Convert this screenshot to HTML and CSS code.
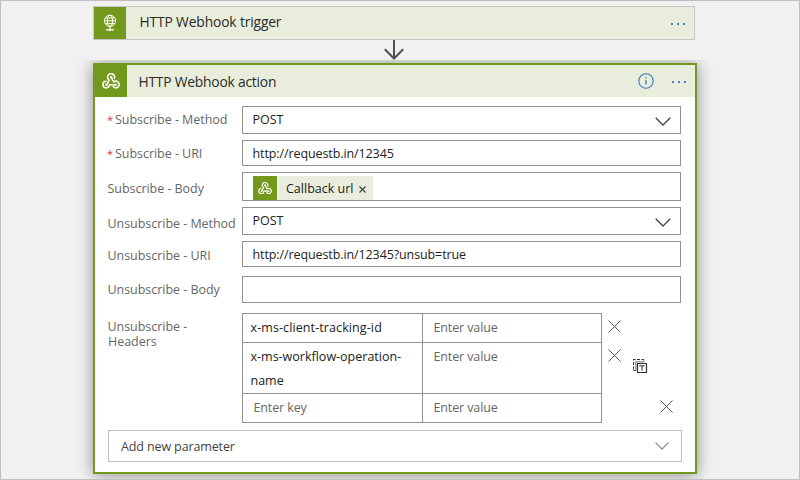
FILE: index.html
```
<!DOCTYPE html>
<html lang="en">
<head>
<meta charset="utf-8">
<title>HTTP Webhook</title>
<link rel="stylesheet" href="styles.css">
</head>
<body>
<svg class="defs" aria-hidden="true">
  <symbol id="webhook" viewBox="0 0 18 16">
    <g fill="none" stroke="#fff" stroke-width="1.5" stroke-linecap="round" stroke-linejoin="round">
      <path d="M12.4 5.3A3.5 3.5 0 1 0 7.2 7.1L4.9 11.4"/>
      <path d="M4.1 8.3A3.3 3.3 0 1 0 7.5 11.8H13.2"/>
      <path d="M9.1 4.2L11.7 8.9A3.3 3.3 0 1 1 11.2 13.6"/>
    </g>
    <g fill="#fff"><circle cx="9.1" cy="4.2" r="1.2"/><circle cx="4.5" cy="11.7" r="1.2"/><circle cx="13.6" cy="11.7" r="1.2"/></g>
  </symbol>
  <symbol id="chevron" viewBox="0 0 16 9"><path d="M.7.7L8 8L15.3.7" fill="none" stroke="currentColor" stroke-width="1.3"/></symbol>
  <symbol id="cross" viewBox="0 0 13 13"><path d="M.5.5L12.5 12.5M12.5.5L.5 12.5" fill="none" stroke="#555" stroke-width="1"/></symbol>
  <symbol id="dots" viewBox="0 0 16 2"><path d="M0 0h2v2H0zM6 0h2v2h-2zM12 0h2v2h-2z" fill="#4a7fc1"/></symbol>
</svg>
<main class="canvas">
  <section class="trigger">
    <div class="trigger-icon">
      <svg width="14" height="18" viewBox="0 0 14 18" fill="none" stroke="#fff" stroke-width="1">
        <circle cx="7" cy="6.8" r="5.6"/><ellipse cx="7" cy="6.8" rx="2.6" ry="5.6"/>
        <path d="M1.4 6.8H12.6M2.3 4H11.7M2.3 9.6H11.7M7 12.4V15"/><path d="M3 15.8H11" stroke-width="1.3"/><circle cx="7" cy="15.7" r="1.3" fill="#fff" stroke="none"/>
      </svg>
    </div>
    <h2 class="title trigger-title">HTTP Webhook trigger</h2>
    <svg class="more" width="16" height="2"><use href="#dots"/></svg>
  </section>
  <div class="connector">
    <svg width="22" height="21" viewBox="0 0 22 21" fill="none" stroke="#505050" stroke-width="2"><path d="M11 0V18.5M1.8 9.3L11 18.5L20.2 9.3"/></svg>
  </div>
  <section class="action">
    <header class="action-head">
      <div class="action-icon"><svg width="18" height="16"><use href="#webhook"/></svg></div>
      <h2 class="title action-title">HTTP Webhook action</h2>
      <svg class="info" width="16" height="16" viewBox="0 0 16 16"><circle cx="8" cy="8" r="7.2" fill="none" stroke="#3f77bd" stroke-width="1.1"/><path d="M7.2 4h1.5v1.6H7.2zM7.2 6.9h1.5v4.6H7.2z" fill="#5c8bc6"/></svg>
      <svg class="more" width="16" height="2"><use href="#dots"/></svg>
    </header>
    <div class="form">
      <div class="row method"><div class="label"><span class="req">*</span>Subscribe - Method</div><div class="field">POST<svg class="chev" width="16" height="9"><use href="#chevron"/></svg></div></div>
      <div class="row uri"><div class="label"><span class="req">*</span>Subscribe - URI</div><div class="field url">http://requestb.in/12345</div></div>
      <div class="row body"><div class="label low">Subscribe - Body</div><div class="field token-field">
        <div class="token"><span class="token-icon"><svg width="14" height="12.5"><use href="#webhook"/></svg></span><span class="token-text">Callback url</span><svg class="token-x" width="7" height="7" viewBox="0 0 6 6"><path d="M.4.4L5.6 5.6M5.6.4L.4 5.6" stroke="#444" stroke-width="1"/></svg></div>
      </div></div>
      <div class="row method"><div class="label low">Unsubscribe - Method</div><div class="field">POST<svg class="chev" width="16" height="9"><use href="#chevron"/></svg></div></div>
      <div class="row uri"><div class="label mid">Unsubscribe - URI</div><div class="field url">http://requestb.in/12345?unsub=true</div></div>
      <div class="row unsub-body"><div class="label">Unsubscribe - Body</div><div class="field"></div></div>
      <div class="row headers">
        <div class="label">Unsubscribe -<br>Headers</div>
        <div class="table">
          <div class="cell key id">x-ms-client-tracking-id</div><div class="cell value">Enter value</div>
          <div class="cell key">x-ms-workflow-operation-<br>name</div><div class="cell value">Enter value</div>
          <div class="cell key hint">Enter key</div><div class="cell value">Enter value</div>
        </div>
        <div class="tools">
          <div class="tool"><svg width="13" height="13"><use href="#cross"/></svg></div>
          <div class="tool"><svg width="13" height="13"><use href="#cross"/></svg>
            <svg class="text-mode" width="15" height="15" viewBox="0 0 15 15" fill="none" stroke="#333"><path d="M.5 10.5V.5H10.5V3" stroke-dasharray="3 1.5" stroke-width="1.1"/><path d="M.5 11.5H3" /><path d="M2.8 11.5V2.8H11.5" stroke="#888" stroke-width="1.2"/><path d="M4.5 4.5h9v9h-9z" fill="#fff" stroke-width="1.2"/><path d="M6.3 6.8h5.4M9 6.8v5" stroke-width="1.1"/></svg>
          </div>
          <div class="tool last"><svg width="13" height="13"><use href="#cross"/></svg></div>
        </div>
      </div>
      <div class="add"><span>Add new parameter</span><svg class="add-chev" width="14" height="8"><use href="#chevron"/></svg></div>
    </div>
  </section>
</main>
</body>
</html>
```
FILE: styles.css
```
* { box-sizing: border-box; }
body { margin: 0; font: 12.5px/18px "Open Sans", "Noto Sans", sans-serif; color: #222; }
svg { display: block; flex: none; }
.defs { display: none; }
.canvas { width: 800px; height: 480px; padding: 5px 0 0 92px; border: 1px solid #c0c0c0; background: #f1f1f1; overflow: hidden; }
.title { margin: 0; font-size: 13.8px; font-weight: 400; line-height: 20px; color: #2a2a2a; white-space: nowrap; }
.more { margin-left: auto; }

.trigger { display: flex; align-items: center; width: 602px; height: 34px; padding-right: 7px; border: 1px solid #c6c6c6; background: #e9eedc; }
.trigger-icon { display: flex; justify-content: center; align-items: center; width: 32px; height: 32px; background: #72991b; }
.trigger-title { margin: -2px 0 0 13.5px; letter-spacing: -0.13px; }
.trigger .more { margin-top: 2px; }

.connector { display: flex; height: 23px; padding-left: 290px; }

.action { width: 604px; height: 411px; border: 2px solid #72991b; background: #fff; box-shadow: 0 1px 15px rgba(0, 0, 0, 0.42); clip-path: inset(-3px -30px -30px -30px); }
.action-head { display: flex; align-items: center; height: 32px; padding-right: 7px; background: #e9eedc; }
.action-icon { display: flex; justify-content: center; align-items: center; width: 32px; height: 32px; background: #72991b; }
.action-title { margin: 1px 0 0 11.5px; letter-spacing: -0.2px; }
.info { margin-left: auto; }
.action-head .more { margin: 2px 0 0 18px; }

.form { padding: 9px 13px 0; }
.row { display: flex; margin-bottom: 6px; }
.method { height: 28px; }
.uri { height: 26px; }
.body { height: 29px; }
.uri + .unsub-body { height: 27px; margin: 9px 0 10px; }
.label { width: 134px; padding-top: 6px; line-height: 15px; color: #666; letter-spacing: -0.04px; text-indent: -0.5px; white-space: nowrap; }
.label.low { padding-top: 9px; }
.label.mid { padding-top: 7px; }
.req { display: inline-block; width: 7.5px; font-size: 11px; color: #e0303b; }
.field { display: flex; justify-content: space-between; width: 439px; padding: 4px 9px 0 9.5px; border: 1px solid #929292; }
.url { letter-spacing: -0.1px; }
.chev { margin-top: 6px; color: #444; }
.token-field { padding: 3px 10px 0; }
.token { display: flex; align-items: center; width: 120px; height: 24px; background: #e9eedc; }
.token-icon { display: flex; justify-content: center; align-items: center; width: 24px; height: 24px; background: #72991b; }
.token-text { margin: 1px 0 0 9px; }
.token-x { margin: 2px 0 0 6px; }

.headers { margin-bottom: 7px; }
.table { display: grid; grid-template: 29px 51px 28px / 180px 178px; width: 360px; border: 1px solid #929292; }
.cell { padding: 2px 0 0 7.5px; border-bottom: 1px solid #929292; line-height: 24px; white-space: nowrap; }
.cell:nth-last-child(-n+2) { border-bottom: 0; }
.key { border-right: 1px solid #929292; }
.id { letter-spacing: 0.1px; }
.hint, .value { padding-left: 10.5px; color: #666; letter-spacing: -0.12px; }
.tools { display: grid; grid-template-rows: 29px 51px 29px; padding: 1px 0 0 5.5px; }
.tool { display: flex; padding-top: 6px; }
.text-mode { margin: 10px 0 0 12.5px; }
.last { padding-left: 52px; }
.add { display: flex; justify-content: space-between; align-items: center; width: 574px; height: 32px; padding: 1px 12px 0; border: 1px solid #bdbdbd; color: #444; letter-spacing: -0.12px; }
.add-chev { margin-top: -2px; color: #777; }
```
